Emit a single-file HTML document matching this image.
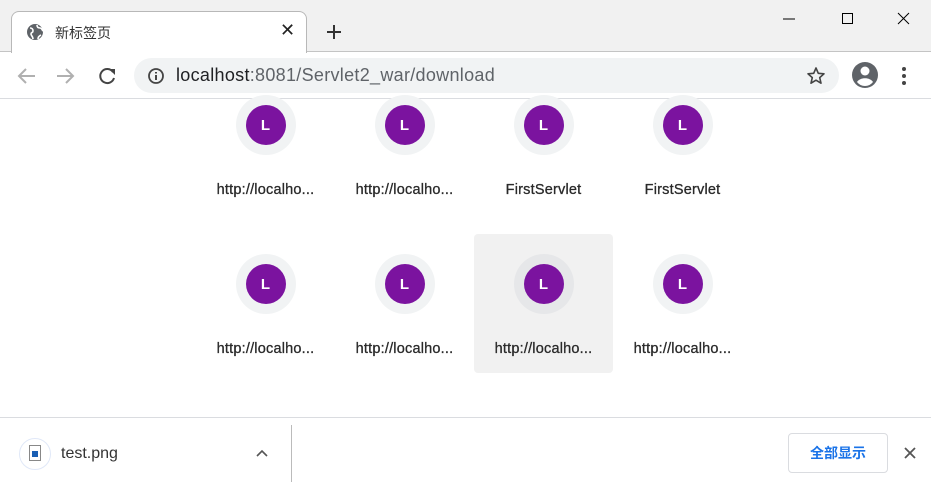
<!DOCTYPE html>
<html><head><meta charset="utf-8"><style>
*{margin:0;padding:0;box-sizing:border-box}
body{width:931px;height:489px;overflow:hidden;background:#fff;font-family:"Liberation Sans","Noto Sans CJK SC",sans-serif;position:relative}
.abs{position:absolute}
.strip{left:0;top:0;width:931px;height:52px;background:#f1f1f1;border-bottom:1px solid #c4c4c4}
.tab{left:11px;top:11px;width:296px;height:42px;background:#fff;border:1px solid #b8b8b8;border-bottom:none;border-radius:8px 8px 0 0}
.omni{left:134px;top:58px;width:705px;height:35px;background:#f1f3f4;border-radius:18px}
.tile{width:139px;text-align:center}
.ring{width:60px;height:60px;border-radius:50%;background:#f1f3f4;margin:0 auto;display:flex;align-items:center;justify-content:center}
.dot{width:40px;height:40px;border-radius:50%;background:#7b139f;color:#fff;font-size:15px;font-weight:bold;display:flex;align-items:center;justify-content:center;font-family:"Liberation Sans",sans-serif}
.lbl{color:#2a2a2a;margin-top:27px;font-family:"Liberation Sans",sans-serif;font-size:14.5px;letter-spacing:0.2px;-webkit-text-stroke:0.3px #2a2a2a}
</style></head><body>
<div class="abs strip"></div>
<div class="abs tab"></div>
<svg class="abs" style="left:26px;top:23px" width="18" height="18" viewBox="0 0 18 18"><circle cx="9" cy="9" r="8" fill="#5f6368"/><path d="M4 5c2 0 3 1 3 3s-2 1-2 3 2 2 2 5M11 2c0 2 1 3 3 3s2 2 3 3M12 16c0-2 1-3 3-4" stroke="#fff" stroke-width="1.6" fill="none"/></svg>
<div class="abs" style="left:55px;top:23px;font-size:14px;color:#333">新标签页</div>
<div class="abs" style="left:280px;top:20px;font-size:18px;color:#222">✕</div>
<svg class="abs" style="left:326px;top:24px" width="16" height="16"><path d="M8 1v14M1 8h14" stroke="#333" stroke-width="2"/></svg>
<svg class="abs" style="left:783px;top:11px" width="130" height="16"><path d="M0 8h12" stroke="#000"/><rect x="59.5" y="2.5" width="10" height="10" fill="none" stroke="#000"/><path d="M115 2l11 11M126 2l-11 11" stroke="#000"/></svg>
<svg class="abs" style="left:16px;top:66px" width="110" height="20"><path d="M19 10H3M10 3l-7 7 7 7" stroke="#b0b0b0" stroke-width="2" fill="none"/><path d="M41 10h16M50 3l7 7-7 7" stroke="#b0b0b0" stroke-width="2" fill="none"/><path d="M97 6a7 7 0 1 0 1 6" stroke="#444" stroke-width="2" fill="none"/><path d="M93 3h6v6z" fill="#444"/></svg>
<div class="abs omni"></div>
<svg class="abs" style="left:147px;top:67px" width="18" height="18"><circle cx="9" cy="9" r="7" stroke="#444" stroke-width="1.8" fill="none"/><path d="M9 8v5M9 5v1.5" stroke="#444" stroke-width="2"/></svg>
<div class="abs" style="left:176px;top:65px;font-size:18px;letter-spacing:0.3px;color:#202124">localhost<span style="color:#5f6368">:8081/Servlet2_war/download</span></div>
<svg class="abs" style="left:806px;top:66px" width="20" height="20" viewBox="0 0 20 20"><path d="M10 2l2.3 5.3 5.7.5-4.3 3.8 1.3 5.6L10 14.2 5 17.2l1.3-5.6L2 7.8l5.7-.5z" fill="none" stroke="#444" stroke-width="1.6" stroke-linejoin="round"/></svg>
<svg class="abs" style="left:851px;top:61px" width="28" height="28"><circle cx="14" cy="14" r="13" fill="#5f6368"/><circle cx="14" cy="10" r="4.5" fill="#fff"/><path d="M6 21c3-5 13-5 16 0a10 10 0 0 1-16 0z" fill="#fff"/></svg>
<svg class="abs" style="left:901px;top:66px" width="6" height="20"><circle cx="3" cy="3" r="2" fill="#444"/><circle cx="3" cy="10" r="2" fill="#444"/><circle cx="3" cy="17" r="2" fill="#444"/></svg>
<div class="abs" style="left:0;top:98px;width:931px;height:1px;background:#dadce0"></div>
<div class="abs" style="left:474px;top:234px;width:139px;height:139px;background:#f1f1f1;border-radius:4px"></div>
<div class="abs tile" style="left:196px;top:95px"><div class="ring"><div class="dot">L</div></div><div class="lbl">http://localho...</div></div>
<div class="abs tile" style="left:335px;top:95px"><div class="ring"><div class="dot">L</div></div><div class="lbl">http://localho...</div></div>
<div class="abs tile" style="left:474px;top:95px"><div class="ring"><div class="dot">L</div></div><div class="lbl">FirstServlet</div></div>
<div class="abs tile" style="left:613px;top:95px"><div class="ring"><div class="dot">L</div></div><div class="lbl">FirstServlet</div></div>
<div class="abs tile" style="left:196px;top:254px"><div class="ring"><div class="dot">L</div></div><div class="lbl">http://localho...</div></div>
<div class="abs tile" style="left:335px;top:254px"><div class="ring"><div class="dot">L</div></div><div class="lbl">http://localho...</div></div>
<div class="abs tile" style="left:474px;top:254px"><div class="ring" style="background:#e6e7e9"><div class="dot">L</div></div><div class="lbl">http://localho...</div></div>
<div class="abs tile" style="left:613px;top:254px"><div class="ring"><div class="dot">L</div></div><div class="lbl">http://localho...</div></div>
<div class="abs" style="left:0;top:417px;width:931px;height:1px;background:#dadce0"></div>
<div class="abs" style="left:19px;top:438px;width:32px;height:32px;border-radius:50%;border:1px solid #e0e8f8"></div>
<div class="abs" style="left:29px;top:445px;width:12px;height:16px;border:1px solid #888;background:#fff"><div style="margin:5px 2px 0;width:6px;height:6px;background:#1a5fb4"></div></div>
<div class="abs" style="left:61px;top:445px;font-size:16px;color:#333">test.png</div>
<svg class="abs" style="left:255px;top:448px" width="14" height="10"><path d="M2 8l5-5 5 5" stroke="#555" stroke-width="1.6" fill="none"/></svg>
<div class="abs" style="left:291px;top:425px;width:1px;height:57px;background:#bbb"></div>
<div class="abs" style="left:788px;top:433px;width:100px;height:40px;border:1px solid #dadce0;border-radius:4px;color:#1a73e8;font-size:14px;font-weight:bold;display:flex;align-items:center;justify-content:center">全部显示</div>
<svg class="abs" style="left:903px;top:446px" width="14" height="14"><path d="M2 2l10 10M12 2L2 12" stroke="#555" stroke-width="1.8"/></svg>
</body></html>
